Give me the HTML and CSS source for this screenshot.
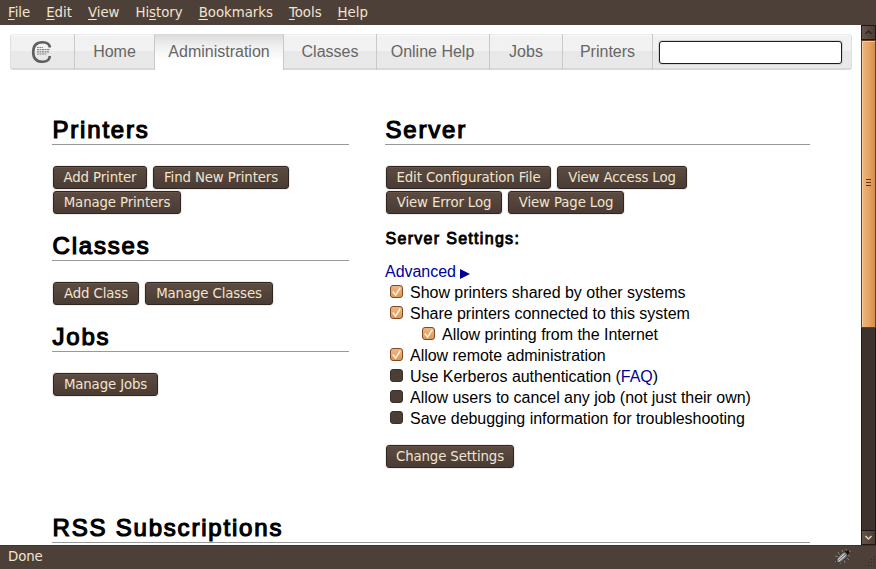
FILE: index.html
```
<!DOCTYPE html>
<html lang="en">
<head>
<meta charset="utf-8">
<title>Administration</title>
<link rel="stylesheet" href="styles.css">
</head>
<body>
<div class="menubar"><span><u>F</u>ile</span><span><u>E</u>dit</span><span><u>V</u>iew</span><span>Hi<u>s</u>tory</span><span><u>B</u>ookmarks</span><span><u>T</u>ools</span><span><u>H</u>elp</span></div>
<div class="viewport">
  <div class="page">
    <nav class="tabs">
      <a class="tab logo"><svg width="22" height="24" viewBox="0 0 22 24"><path d="M18.800 7.500Q18.500 2.200 11.500 2.200Q2.200 2.200 2.200 12Q2.200 21.800 11.500 21.800Q18.500 21.800 18.800 16" fill="none" stroke="#5f5f5f" stroke-width="2.600"/><path d="M6 7.500H12M6 9.700H19M6 11.900H18M6 14H16" stroke="#888" stroke-width="1.200" stroke-dasharray="2 .5"/></svg></a>
      <a class="tab home">Home</a>
      <a class="tab admin">Administration</a>
      <a class="tab classes">Classes</a>
      <a class="tab help">Online Help</a>
      <a class="tab jobs">Jobs</a>
      <a class="tab printers">Printers</a>
      <div class="search"><input type="text" aria-label="Search"></div>
    </nav>
    <div class="columns">
      <section class="left">
        <h2>Printers</h2>
        <div class="buttons"><button class="w94">Add Printer</button><button class="w136">Find New Printers</button><button class="w128">Manage Printers</button></div>
        <h2>Classes</h2>
        <div class="buttons"><button class="w86">Add Class</button><button class="w128">Manage Classes</button></div>
        <h2>Jobs</h2>
        <div class="buttons"><button class="w105">Manage Jobs</button></div>
      </section>
      <section class="right">
        <h2>Server</h2>
        <div class="buttons logs"><button class="w165">Edit Configuration File</button><button class="w130">View Access Log</button><button class="w116">View Error Log</button><button class="w116">View Page Log</button></div>
        <h3>Server Settings:</h3>
        <div class="row"><a class="link">Advanced <svg class="arrow" width="10" height="10"><path d="M0 0L10 5L0 10Z" fill="#000099"/></svg></a></div>
        <div class="row"><i class="box on"><svg viewBox="0 0 12 12"><path d="M2 6L5 10L10 2"/></svg></i><span>Show printers shared by other systems</span></div>
        <div class="row"><i class="box on"><svg viewBox="0 0 12 12"><path d="M2 6L5 10L10 2"/></svg></i><span>Share printers connected to this system</span></div>
        <div class="row sub"><i class="box on"><svg viewBox="0 0 12 12"><path d="M2 6L5 10L10 2"/></svg></i><span>Allow printing from the Internet</span></div>
        <div class="row"><i class="box on"><svg viewBox="0 0 12 12"><path d="M2 6L5 10L10 2"/></svg></i><span>Allow remote administration</span></div>
        <div class="row"><i class="box"></i><span>Use Kerberos authentication (<a class="link">FAQ</a>)</span></div>
        <div class="row"><i class="box"></i><span>Allow users to cancel any job (not just their own)</span></div>
        <div class="row"><i class="box"></i><span>Save debugging information for troubleshooting</span></div>
        <div class="buttons change"><button class="w128">Change Settings</button></div>
      </section>
    </div>
    <h2 class="rss">RSS Subscriptions</h2>
  </div>
  <div class="scrollbar">
    <div class="step"><svg width="13" height="13"><path d="M3.500 8L6.500 5L9.500 8" fill="none" stroke="#2e2520" stroke-width="1.500"/></svg></div>
    <div class="thumb"><svg width="5" height="7"><path d="M0 .5H5M0 3.500H5M0 6.500H5" stroke="#5d3819"/></svg></div>
    <div class="trough"></div>
    <div class="step down"><svg width="13" height="13"><path d="M3.500 5L6.500 8L9.500 5" fill="none" stroke="#e0d2c0" stroke-width="1.500"/></svg></div>
  </div>
</div>
<div class="status"><span>Done</span>
  <svg class="bug" width="18" height="18" viewBox="0 0 18 18"><path d="M4 4L6 7M1 8L5 9M1 14L4 13M6 16L7 14M11 15L10 12M15 12L12 9M8 2L9 5M16 8L13 7M12 1L13 4M17 3L14 4" stroke="#8b837b" stroke-width=".9"/><path d="M2.500 14.500Q1.500 11.500 4.500 8.500L8.500 4.500Q11.500 2.500 13.500 5Q14.500 7.500 12 10L8 13.500Q5 15.500 2.500 14.500Z" fill="#777776" stroke="#292929" stroke-width=".8"/><path d="M4.500 13.500L11.500 7.500M4 11.500L10.500 5.500" stroke="#eee" stroke-width="1"/><path d="M11 3.500Q14 1.500 15.500 4L13.500 7Z" fill="#111"/></svg>
  <svg class="grip" width="13" height="13" viewBox="0 0 13 13"><path d="M11 1.500h1M8 4.500h1M11 4.500h1M5 7.500h1M8 7.500h1M11 7.500h1M2 10.500h1M5 10.500h1M8 10.500h1M11 10.500h1" stroke="#302823"/></svg>
</div>
</body>
</html>
```
FILE: styles.css
```
* { box-sizing: border-box; }
body { margin: 0; width: 876px; height: 569px; overflow: hidden; display: flex; flex-direction: column; font-family: "Liberation Sans", sans-serif; background: #fff; }
.menubar { height: 25px; flex: none; display: flex; gap: 16px; padding: 1px 0 0 8px; background: #4d4038; color: #f1e4d0; font: 13.330px/24px "DejaVu Sans", sans-serif; letter-spacing: -.03px; }
.menubar u { text-decoration: underline; text-underline-offset: 2px; text-decoration-skip-ink: none; }
.viewport { height: 520px; flex: none; display: flex; }
.page { width: 861px; overflow: hidden; }
.tabs { display: flex; height: 36px; width: 842px; margin: 9px 0 0 10px; border: 1px solid #e4e4e4; border-width: 1px 1px 2px; border-color: #ededed #e0e0e0 #d8d8d8; border-radius: 3px; background: linear-gradient(#fafafa 0, #f1f1f1 6%, #f2f2f2 49%, #e8e8e8 50%, #e9e9e9); }
.tab { display: flex; align-items: center; justify-content: center; margin: -1px 0 -2px; height: 36px; border-right: 1px solid #c9c9c9; color: #666; font-size: 16px; flex: none; padding-bottom: 1px; }
.logo { width: 64px; padding: 0 2px 1px 0; }
.home { width: 80px; }
.admin { width: 129px; background: linear-gradient(#dadada, #f1f1f1 35%, #fff 75%); }
.classes { width: 93px; }
.help { width: 113px; padding-right: 1px; }
.jobs { width: 73px; }
.printers { width: 90px; }
.search { padding: 6px 0 0 6px; }
.search input { display: block; width: 183px; height: 23px; border: 1px solid #1c1c1c; border-radius: 3px; padding: 0; background: #fff; outline: 0; box-shadow: 0 0 0 1px #d6d3d0; }
.columns { display: flex; gap: 36px; margin: 45px 0 0 52px; height: 398px; }
.left { width: 297px; }
.right { width: 425px; }
h2 { height: 30px; margin: 0; border-bottom: 1px solid #999; padding-left: .5px; font-size: 24px; line-height: 30px; font-weight: 400; letter-spacing: 1.800px; -webkit-text-stroke: 1.200px #000; white-space: nowrap; }
.buttons { display: flex; flex-wrap: wrap; gap: 2px 6px; margin: 21px 0 17px 1px; }
.logs { padding-right: 100px; }
button { height: 23px; padding: 0; border: 1px solid #30261f; border-radius: 3px; background: linear-gradient(#5d4b41, #493c34); box-shadow: 0 0 0 1px #eeeceb, inset 0 1px #67544a; color: #f1e4d0; font: 13.330px/21px "DejaVu Sans", sans-serif; letter-spacing: -.13px; white-space: nowrap; }
.w86 { width: 86px; }
.w94 { width: 94px; }
.w105 { width: 105px; }
.w116 { width: 116px; }
.w128 { width: 128px; }
.w130 { width: 130px; }
.w136 { width: 136px; }
.w165 { width: 165px; }
h3 { margin: -2px 0 12px; padding-left: .5px; font-size: 16px; line-height: 20px; height: 20px; font-weight: 400; letter-spacing: 1.300px; -webkit-text-stroke: .9px #000; }
.row { display: flex; height: 21px; line-height: 21px; font-size: 16px; letter-spacing: -.03px; white-space: nowrap; }
.sub { padding-left: 32px; }
.link { color: #000099; }
.arrow { vertical-align: -2px; }
.box { width: 13px; height: 13px; margin: 3px 7px 0 5px; flex: none; border: 1px solid #38302b; border-radius: 3px; background: #4a3e37; }
.on { border-color: #7c4b25; background: linear-gradient(#efb780, #dc9856); }
.box svg { display: block; width: 11px; height: 11px; }
.box path { fill: none; stroke: #fff2e4; stroke-width: 1.700; }
.change { margin-top: 16px; }
.rss { width: 758px; margin-left: 52px; }
.scrollbar { width: 15px; display: flex; flex-direction: column; background: #3c332f; }
.step { height: 15px; flex: none; border: 1px solid #1f1815; background: linear-gradient(90deg, #66544a, #493b33); }
.step svg { display: block; }
.thumb { height: 288px; flex: none; display: flex; align-items: center; justify-content: center; padding-bottom: 3px; border: 1px solid #663d1c; box-shadow: inset 1px 1px #f7ca9b; background: linear-gradient(90deg, #edb67b 0, #e6a467 50%, #d78e48); }
.trough { flex: 1; border: solid #1c1714; border-width: 0 1px; background: #3c332f; }
.status { height: 24px; flex: none; display: flex; background: #4d4038; border-top: 1px solid #40342e; color: #f1e4d0; font: 13.330px/21px "DejaVu Sans", sans-serif; letter-spacing: -.1px; padding-left: 8px; }
.bug { margin: 2px 4px 0 auto; }
.grip { margin: 9px 0 0 7px; }
```
